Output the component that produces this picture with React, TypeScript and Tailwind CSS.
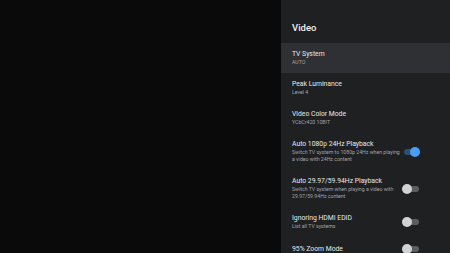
import React from 'react';

type Item = {
  title: string;
  sub: string[];
  toggle?: 'on' | 'off';
  active?: boolean;
};

const items: Item[] = [
  { title: 'TV System', sub: ['AUTO'], active: true },
  { title: 'Peak Luminance', sub: ['Level 4'] },
  { title: 'Video Color Mode', sub: ['YCbCr420 10BIT'] },
  {
    title: 'Auto 1080p 24Hz Playback',
    sub: ['Switch TV system to 1080p 24Hz when playing', 'a video with 24Hz content'],
    toggle: 'on',
  },
  {
    title: 'Auto 29.97/59.94Hz Playback',
    sub: ['Switch TV system when playing a video with', '29.97/59.94Hz content'],
    toggle: 'off',
  },
  { title: 'Ignoring HDMI EDID', sub: ['List all TV systems'], toggle: 'off' },
  { title: '95% Zoom Mode', sub: [], toggle: 'off' },
];

function Toggle({ on }: { on: boolean }) {
  return (
    <div className="relative h-[10px] w-[18px] shrink-0">
      <div
        className={`absolute left-[2px] top-[2px] h-[6px] w-[15px] rounded-full ${
          on ? 'bg-[#2c4f78]' : 'bg-[#5c5d60]'
        }`}
      />
      <div
        className={`absolute top-0 h-[10px] w-[10px] rounded-full ${
          on ? 'right-0 bg-[#4a9ff5]' : 'left-0 bg-[#d2d2d2]'
        }`}
      />
    </div>
  );
}

export default function App() {
  return (
    <div
      className="flex h-[253px] w-[450px] overflow-hidden bg-[#0a0a0b]"
      style={{ fontFamily: 'Roboto, "Noto Sans", sans-serif' }}
    >
      <div className="w-[281px] shrink-0" />

      {/* settings side panel */}
      <div className="flex-1 bg-[#1f2022]">
        <h1 className="pl-[11px] pt-[21px] pb-[8px] text-[9.5px] font-medium leading-[14px] text-[#f1f1f1]">
          Video
        </h1>

        {items.map((it) => (
          <div
            key={it.title}
            className={`flex items-center pl-[11px] pr-[30px] py-[7px] ${it.active ? 'bg-[#2f3033]' : ''}`}
          >
            <div className="flex-1">
              <div className="text-[6.8px] leading-[9px] text-[#e8e8e8]">{it.title}</div>
              {it.sub.map((line) => (
                <div key={line} className="text-[5.2px] leading-[7px] text-[#a3a3a5]">
                  {line}
                </div>
              ))}
            </div>
            {it.toggle && <Toggle on={it.toggle === 'on'} />}
          </div>
        ))}
      </div>
    </div>
  );
}
